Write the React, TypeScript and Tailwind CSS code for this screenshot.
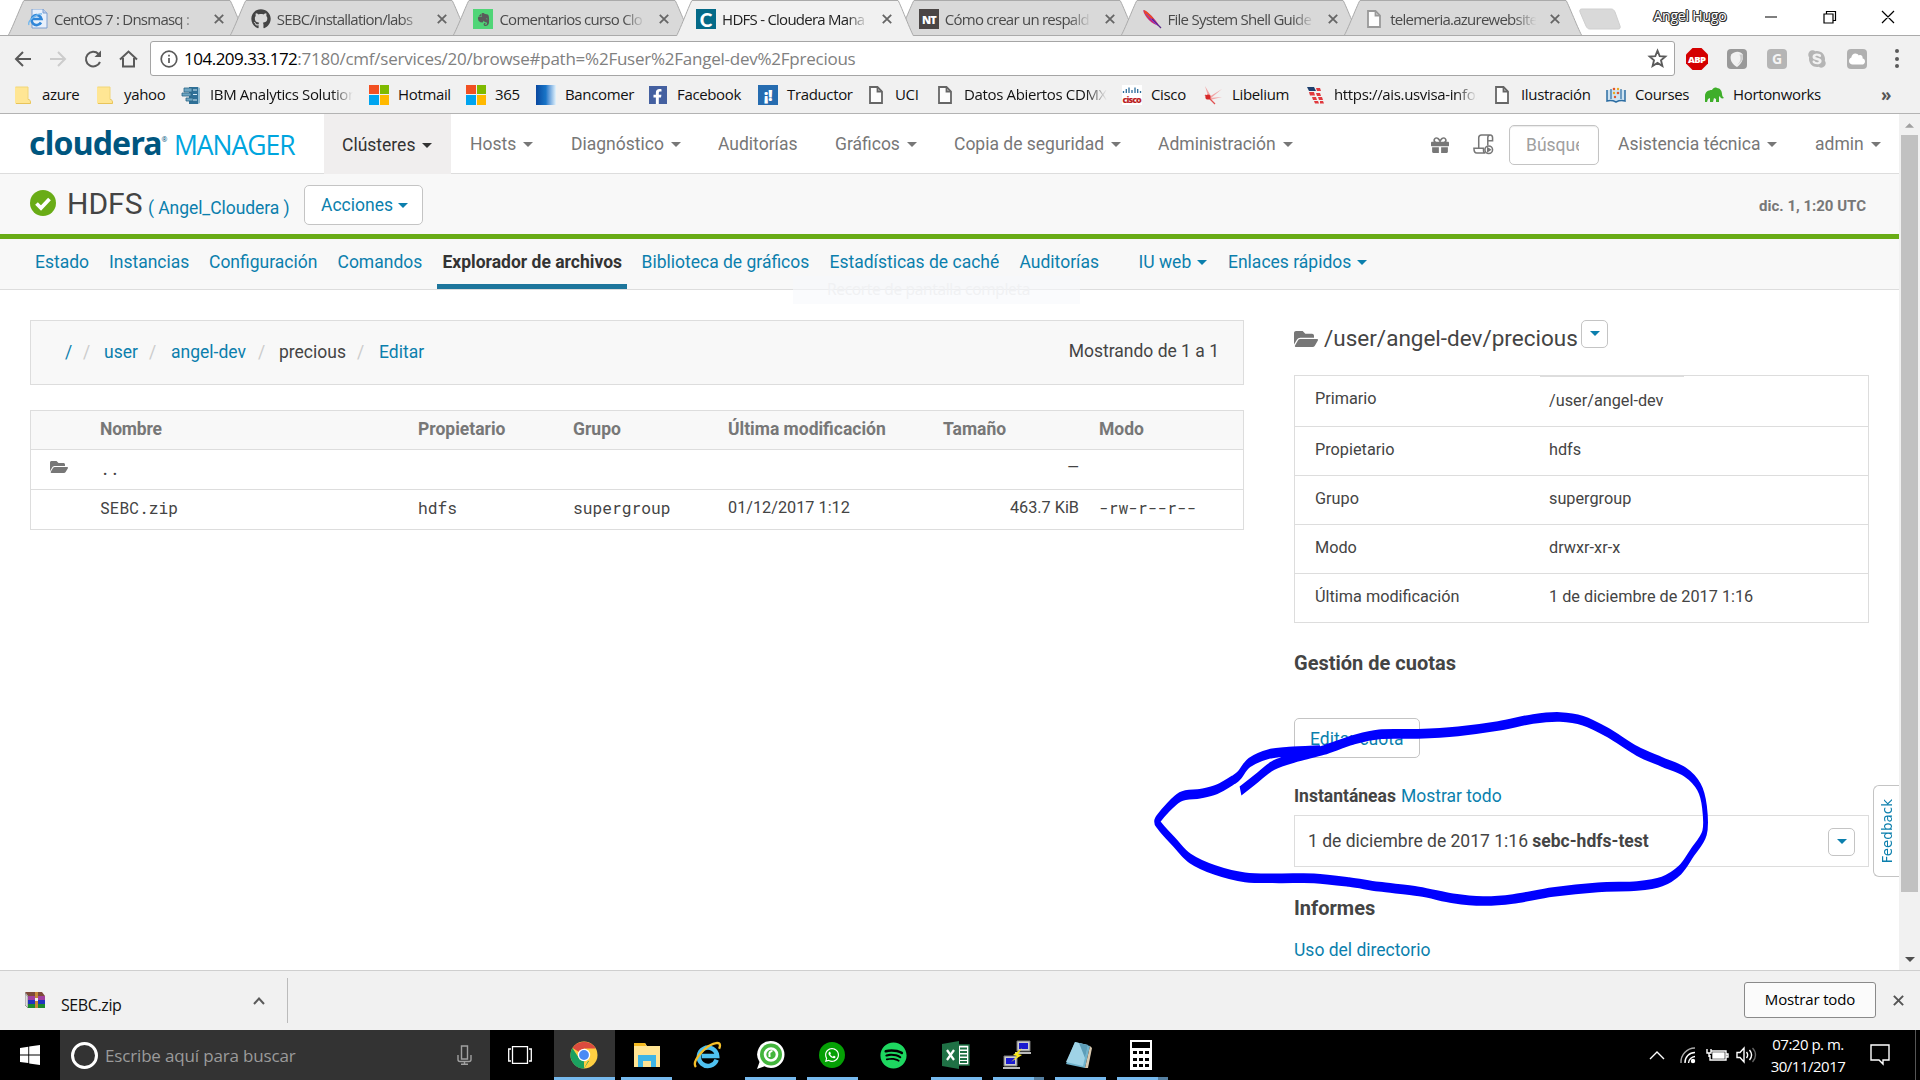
import React from "react";
import { FaGithub, FaEvernote, FaFolderOpen, FaWhatsapp, FaSpotify, FaFacebookF, FaGift, FaSkype, FaCloud } from "react-icons/fa";

const UI = "font-['Open_Sans','Noto_Sans',sans-serif]";

function Caret({ className = "" }: { className?: string }) {
  return (
    <svg viewBox="0 0 10 5" className={`h-[5px] w-[10px] shrink-0 ${className}`} fill="currentColor">
      <path d="M0 0h10L5 5z" />
    </svg>
  );
}

function PageIcon({ className = "text-[#666]" }: { className?: string }) {
  return (
    <svg viewBox="0 0 14 18" className={`h-[18px] w-[14px] ${className}`} fill="#fdfdfd" stroke="currentColor" strokeWidth="1.8">
      <path d="M1 1h7.5L13 5.500V17H1z" />
      <path d="M8.500 1v4.500H13" fill="none" />
    </svg>
  );
}

function IEPage() {
  return (
    <svg viewBox="0 0 20 20" className="size-5">
      <path d="M4 0h11l4 4v15H4z" fill="#e8f0fb" stroke="#7d9fd0" />
      <path d="M15 0v4h4" fill="#b9cdec" stroke="#7d9fd0" />
      <path d="M13 13.500A5 5 0 1 1 13.500 10H5" fill="none" stroke="#2f86d8" strokeWidth="2.600" />
      <path d="M1 16C-1 12 9 4 14 5" fill="none" stroke="#6fb6ee" strokeWidth="1.300" />
    </svg>
  );
}

function Feather() {
  return (
    <svg viewBox="0 0 20 20" className="size-5">
      <path d="M1 1c4 1 13 9 16 16C10 15 3 9 1 1z" fill="#c2267e" />
      <path d="M2 1c3 1 7 5 10 9L6 9C4 7 2 4 2 1z" fill="#e8462c" />
      <path d="M10 10l9 9" stroke="#5b2a86" strokeWidth="1.300" />
      <path d="M4 5l11 11" stroke="#7f3ad0" strokeWidth="1" />
    </svg>
  );
}

const tabs = [
  { title: "CentOS 7 : Dnsmasq :", icon: <IEPage /> },
  { title: "SEBC/installation/labs", icon: <FaGithub className="size-5 text-[#444]" /> },
  {
    title: "Comentarios curso Clo",
    icon: (
      <span className="flex size-5 items-center justify-center bg-[#50d577]">
        <FaEvernote className="size-[15px] text-[#5a5a5a]" />
      </span>
    ),
  },
  {
    title: "HDFS - Cloudera Mana",
    active: true,
    icon: <span className="flex size-5 items-center justify-center bg-[#046a88] font-['Lato'] text-[19px] leading-none font-black text-white">C</span>,
  },
  {
    title: "Cómo crear un respald",
    icon: <span className="flex size-5 items-center justify-center bg-[#4b4645] font-['Open_Sans'] text-[11px] leading-none font-extrabold tracking-[-1px] text-white">NT</span>,
  },
  { title: "File System Shell Guide", icon: <Feather /> },
  { title: "telemeria.azurewebsite", icon: <PageIcon className="ml-[3px] text-[#999]" /> },
];

function CloseX({ className = "" }: { className?: string }) {
  return (
    <svg viewBox="0 0 10 10" className={`size-[10px] ${className}`} stroke="currentColor" strokeWidth="1.8">
      <path d="M.8.8l8.400 8.400M9.200.8L.8 9.200" />
    </svg>
  );
}

function TabStrip() {
  return (
    <div className={`flex h-9 bg-[linear-gradient(#aaa,#aaa)] bg-[length:100%_1px] bg-bottom bg-no-repeat pl-[7.5px] ${UI}`}>
      {tabs.map((t) => (
        <div key={t.title} className={`relative mr-[-15.3px] h-9 w-[238px] shrink-0 ${t.active ? "z-10" : ""}`}>
          <svg viewBox="0 0 238 36" className="absolute inset-0 h-9 w-[238px]">
            <path
              d={t.active ? "M0 36.500C2 35 15 .5 16 .5H222C223 .5 236 35 238 36.500" : "M0 35.500C2 34 15 .5 16 .5H222C223 .5 236 34 238 35.500"}
              fill={t.active ? "#f1f1f1" : "#d9d9d9"}
              stroke="#aaa"
            />
            {!t.active && <path d="M0 35.500H238" stroke="#aaa" />}
          </svg>
          <div className="relative flex h-full items-center pt-0.5 pl-[20.500px]">
            <span className="flex w-5">{t.icon}</span>
            <span
              className={`ml-[6px] w-[148px] text-[15px] leading-5 tracking-[-0.75px] whitespace-nowrap [mask-image:linear-gradient(to_right,black_84%,transparent_99%)] ${t.active ? "text-[#222]" : "text-[#4a4a4a]"}`}
            >
              {t.title}
            </span>
            <CloseX className="ml-[12px] text-[#666]" />
          </div>
        </div>
      ))}
      <svg viewBox="0 0 44 22" className="mt-2 ml-[12px] h-[22px] w-[44px]">
        <path d="M4 1h29c2 0 3 1 4 3l5 14c.6 2 0 3-2 3H12c-2 0-3-1-4-3L2 4c-.6-2 0-3 2-3z" fill="#d9d9d9" stroke="#cfcfcf" />
      </svg>
      <span className="mt-[6px] ml-[31px] w-[75px] text-[14px] leading-5 tracking-[-0.2px] whitespace-nowrap text-white [text-shadow:1px_0_#333,-1px_0_#333,0_1px_#333,0_-1px_#333,1px_1px_#333,-1px_-1px_#333]">
        Angel Hugo
      </span>
      <svg viewBox="0 0 132 14" className="mt-[10px] ml-[36px] h-[14px] w-[132px]" fill="none" stroke="#000" strokeWidth="1.200">
        <path d="M1 7h12M60 4h9v9h-9zM62.500 4V1.500h9v9H69M118 1l12 12M130 1l-12 12" />
      </svg>
    </div>
  );
}

function Toolbar() {
  return (
    <div className={`flex h-[45px] items-center bg-[#f1f1f1] pl-[14px] ${UI}`}>
      <svg viewBox="0 0 124 20" className="h-5 w-[124px]" fill="none" stroke="#5a5a5a" strokeWidth="2">
        <path d="M17 10H2M9 3l-7 7 7 7" />
        <path d="M36 10h15M44 3l7 7-7 7" stroke="#ccc" />
        <path d="M86 13a7.300 7.300 0 1 1-1.500-8" />
        <path d="M87 1.500V8h-6.500z" fill="#5a5a5a" stroke="none" />
        <path d="M106 10.500l8.500-8 8.500 8M109 9v8.500h11V9" />
      </svg>
      <div className="ml-3 flex h-[35px] w-[1525px] items-center rounded-[3px] border border-[#a5a5a5] bg-white pl-[9px]">
        <svg viewBox="0 0 18 18" className="size-[18px]" fill="none" stroke="#5a5a5a" strokeWidth="1.700">
          <circle cx="9" cy="9" r="7.800" />
          <path d="M9 8v5M9 4.700v1.900" />
        </svg>
        <span className="ml-[6px] text-[17px] leading-6 tracking-[-0.24px] whitespace-nowrap text-[#808080]">
          <span className="tracking-[-0.5px] text-black">104.209.33.172</span>:7180/cmf/services/20/browse#path=%2Fuser%2Fangel-dev%2Fprecious
        </span>
        <svg viewBox="0 0 24 24" className="mr-[6px] ml-auto size-[21px]" fill="none" stroke="#5a5a5a" strokeWidth="2.100">
          <path d="M12 3l2.500 6.200 6.500.5-5 4.300 1.600 6.500L12 17l-5.600 3.500L8 14 3 9.700l6.500-.5z" />
        </svg>
      </div>
      <svg viewBox="0 0 22 22" className="ml-[11px] size-[22px]">
        <path d="M6.500 0h9L22 6.500v9L15.500 22h-9L0 15.500v-9z" fill="#d40000" />
        <text x="11" y="14.500" textAnchor="middle" fontFamily="Open Sans" fontWeight="800" fontSize="9.500" textLength="18" fill="#fff">ABP</text>
      </svg>
      <span className="ml-[19px] flex size-5 items-center justify-center rounded bg-[#999]">
        <svg viewBox="0 0 14 14" className="size-4">
          <path d="M2 3c3-3 8-3 10 0 1 4-1 8-5 11C3 12 0 7 2 3z" fill="#f1f1f1" />
          <path d="M9 3c2 3 1 7-2 9 3-1 6-5 5-9z" fill="#ccc" />
        </svg>
      </span>
      <span className="ml-5 flex size-5 items-center justify-center rounded-sm bg-[#b5b5b5] text-[14px] leading-none font-bold text-[#f4f4f4]">G</span>
      <FaSkype className="ml-5 size-5 text-[#b5b5b5]" />
      <span className="ml-5 flex size-5 items-center justify-center rounded bg-[#b0b0b0]">
        <FaCloud className="size-4 text-white" />
      </span>
      <span className="ml-[28px] flex flex-col gap-[3.500px]">
        <i className="size-1 rounded-full bg-[#5a5a5a]" />
        <i className="size-1 rounded-full bg-[#5a5a5a]" />
        <i className="size-1 rounded-full bg-[#5a5a5a]" />
      </span>
    </div>
  );
}

function Folder() {
  return (
    <svg viewBox="0 0 16 18" className="h-[18px] w-4">
      <path d="M0 1h13v13l3 1v2.500H0z" fill="#ffe694" />
      <path d="M13 13.500c2 0 2.500 1 2.500 4H1" fill="none" stroke="#e8c45a" />
      <path d="M.5 1h12.500v12.500" fill="none" stroke="#f1d679" />
    </svg>
  );
}

function MsLogo() {
  return (
    <span className="grid size-5 grid-cols-2 gap-px">
      <i className="bg-[#f25022]" />
      <i className="bg-[#7fba00]" />
      <i className="bg-[#00a4ef]" />
      <i className="bg-[#ffb900]" />
    </span>
  );
}

const bookmarks: { label: string; w: string; icon: React.ReactNode; fade?: boolean }[] = [
  { label: "azure", w: "w-[82px]", icon: <Folder /> },
  { label: "yahoo", w: "w-[86px]", icon: <Folder /> },
  {
    label: "IBM Analytics Solutions",
    w: "w-[188px]",
    fade: true,
    icon: (
      <svg viewBox="0 0 20 20" className="size-5">
        <path d="M8 2h9v17H8z" fill="#2f7097" />
        <path d="M17 2l2 1v15l-2 1z" fill="#8fb9cf" />
        <path d="M3 3h8v4H3zM1 8h9v3H1zM5 13h7v3H5z" fill="#6ea7c4" stroke="#2b6486" strokeWidth=".8" />
        <path d="M12 5h4M12 9.500h4M12 15h4" stroke="#d7eaf4" />
      </svg>
    ),
  },
  { label: "Hotmail", w: "w-[97px]", icon: <MsLogo /> },
  { label: "365", w: "w-[70px]", icon: <MsLogo /> },
  { label: "Bancomer", w: "w-[112px]", icon: <span className="size-5 bg-linear-to-r from-[#0a48a0] via-[#1976c8] via-50% to-[#e4f3fb]" /> },
  {
    label: "Facebook",
    w: "w-[110px]",
    icon: (
      <span className="flex size-[18px] items-end justify-end bg-[#4460a0]">
        <FaFacebookF className="mr-[2px] size-[15px] text-white" />
      </span>
    ),
  },
  { label: "Traductor", w: "w-[108px]", icon: <span className="flex size-5 items-center justify-center bg-[#266cb0] text-[16px] leading-none font-extrabold text-white">¡!</span> },
  { label: "UCI", w: "w-[69px]", icon: <PageIcon /> },
  { label: "Datos Abiertos CDMX", w: "w-[187px]", fade: true, icon: <PageIcon /> },
  {
    label: "Cisco",
    w: "w-[81px]",
    icon: (
      <svg viewBox="0 0 20 20" className="size-5 bg-white">
        <path d="M1.500 6v2M4.300 4v4M7 2.500V8M10 5v3M13 2.500V8M15.700 4v4M18.500 6v2" stroke="#2b6c9a" strokeWidth="1.300" />
        <text x="10" y="17.500" textAnchor="middle" fontFamily="Open Sans" fontWeight="800" fontSize="9" textLength="19" fill="#b22">cisco</text>
      </svg>
    ),
  },
  {
    label: "Libelium",
    w: "w-[102px]",
    icon: (
      <svg viewBox="0 0 20 20" className="size-5">
        <path d="M5 11L2 1l6 10zM6 12L19 4 8 13zM6 13l13-1-12 3z" fill="#f2a6a6" />
        <path d="M2 10l5 4M5 12l7 7" stroke="#e05050" strokeWidth="1.300" />
        <circle cx="5" cy="12" r="2.600" fill="#d62828" />
      </svg>
    ),
  },
  {
    label: "https://ais.usvisa-info.com",
    w: "w-[187px]",
    fade: true,
    icon: (
      <svg viewBox="0 0 18 18" className="size-[18px]">
        <path d="M1 1h7l2 4H3z" fill="#1c3f6e" />
        <path d="M10 2h4l1 3h-4zM3 6h5l1 3.500H4zM10 7h4l1 3h-4zM6 11h4l1 3H7zM12 11h4l1 3h-4zM8 15h4l1 2.500H9zM14 15h3l1 2.500h-4z" fill="#e0393e" />
      </svg>
    ),
  },
  { label: "Ilustración", w: "w-[114px]", icon: <PageIcon /> },
  {
    label: "Courses",
    w: "w-[98px]",
    icon: (
      <svg viewBox="0 0 20 20" className="size-5">
        <path d="M1 5v11c4-1 7 0 9 1 2-1 5-2 9-1V5" fill="#cfe3f1" stroke="#2c6da3" strokeWidth="1.500" />
        <path d="M5 4v10M15 4v10" stroke="#2c6da3" strokeWidth="1.200" />
        <g fill="#e2572b"><circle cx="8" cy="4" r="1.300" /><circle cx="12" cy="8" r="1.300" /><circle cx="9" cy="12" r="1.200" /></g>
        <g fill="#e9a820"><circle cx="12" cy="4" r="1.200" /><circle cx="8" cy="8" r="1.200" /></g>
      </svg>
    ),
  },
  {
    label: "Hortonworks",
    w: "w-[177px]",
    icon: (
      <svg viewBox="0 0 20 20" className="size-5" fill="#3fae2a">
        <path d="M1 17V11c0-4 3-6 7-6 1-2 3-3 5-2 3 0 5 3 5 6 0 2 1 3 2 4-2 1-4 0-4-2l-1 1v5h-3v-3l-2-1-1 4H6v-4l-2 1-1 3z" />
      </svg>
    ),
  },
];

function Bookmarks() {
  return (
    <div className={`flex h-[33px] items-center border-b border-[#b3b3b3] bg-[#f1f1f1] pb-[5px] pl-[13px] text-[15px] tracking-[-0.35px] text-[#111] ${UI}`}>
      {bookmarks.map((b) => (
        <div key={b.label} className={`flex shrink-0 items-center whitespace-nowrap ${b.w}`}>
          <span className="flex w-5 justify-center">{b.icon}</span>
          <span className={b.fade ? "ml-[9px] w-[143px] overflow-hidden [mask-image:linear-gradient(to_right,black_85%,transparent_100%)]" : "ml-[9px]"}>{b.label}</span>
        </div>
      ))}
      <span className="text-[17px] font-bold text-[#555]">»</span>
    </div>
  );
}

const nav = [
  { label: "Hosts", w: "w-[101px]", caret: true },
  { label: "Diagnóstico", w: "w-[147px]", caret: true },
  { label: "Auditorías", w: "w-[117px]" },
  { label: "Gráficos", w: "w-[119px]", caret: true },
  { label: "Copia de seguridad", w: "w-[204px]", caret: true },
  { label: "Administración", w: "w-[273px]", caret: true },
];

function Navbar() {
  return (
    <div className="flex h-[60px] shrink-0 items-center border-b border-[#ddd] bg-white text-[17.500px] text-[#777]">
      <div className="flex w-[324px] items-baseline pb-[2px] pl-[29px] leading-none whitespace-nowrap">
        <span className="w-[145px] font-['Noto_Sans'] text-[32px] font-bold tracking-[-0.8px] text-[#00567f]">
          cloudera<sup className="top-[-1.800em] text-[7px] font-normal">®</sup>
        </span>
        <span className="font-['Open_Sans'] text-[26.500px] font-medium tracking-[-1px] text-[#00a5de]">MANAGER</span>
      </div>
      <div className="-mb-px flex h-[60px] w-[127px] items-center gap-[7px] bg-[#f0eeee] pt-[2px] pl-[18px] text-[#333]">
        Clústeres
        <Caret />
      </div>
      <div className="ml-[19px] flex pt-[2px]">
        {nav.map((n) => (
          <div key={n.label} className={`flex items-center gap-[7px] whitespace-nowrap ${n.w}`}>
            {n.label}
            {n.caret && <Caret />}
          </div>
        ))}
      </div>
      <FaGift className="mt-[2px] size-[18px]" />
      <svg viewBox="0 0 22 22" className="mt-[2px] ml-6 size-[21px]" fill="none" stroke="currentColor" strokeWidth="1.600">
        <path d="M6 15V4c0-2 1-3 3-3h9c2 0 2.500 1 2.500 3v3h-5V4c0-2 1-3 2.500-3M15.500 7v5M2 15h9v2c0 2 1 3 2 3H4c-2 0-3-2-3-5z" />
        <circle cx="16.500" cy="16.500" r="4" />
        <path d="M15.500 14.800l2.500 1.700-2.500 1.700z" fill="currentColor" />
      </svg>
      <div className="mt-[2px] ml-[15px] flex h-10 w-[90px] items-center rounded-[5px] border border-[#c4c4c4] px-4 shadow-[inset_0_1px_1px_rgba(0,0,0,0.08)]">
        <span className="w-[53px] overflow-hidden pt-0.5 whitespace-nowrap text-[#a0a0a0]">Búsqueda</span>
      </div>
      <div className="ml-[19px] flex w-[197px] items-center gap-[7px] pt-[2px]">
        Asistencia técnica
        <Caret />
      </div>
      <div className="flex items-center gap-[7px] pt-[2px]">
        admin
        <Caret />
      </div>
    </div>
  );
}

function CaretButton({ className = "" }: { className?: string }) {
  return (
    <span className={`flex h-7 w-[27px] shrink-0 items-center justify-center rounded-[5px] border border-[#c4c4c4] bg-white text-[#0b7fad] ${className}`}>
      <Caret />
    </span>
  );
}

function ServiceHeader() {
  return (
    <div className="flex h-[65px] shrink-0 items-center border-b-[5px] border-[#69ac16] bg-[#f8f8f8] pr-[33px] pl-[30px] whitespace-nowrap text-[#0b7fad]">
      <svg viewBox="0 0 26 26" className="mb-[2px] size-[26px]">
        <circle cx="13" cy="13" r="13" fill="#69ac16" />
        <path d="M6.500 13.500l4.500 4.500 8.500-9" fill="none" stroke="#fff" strokeWidth="3.800" />
      </svg>
      <div className="ml-[11px] flex w-[237px] items-baseline">
        <span className="w-[81px] text-[30px] leading-[40px] text-[#444]">HDFS</span>
        <span className="text-[17.500px] tracking-[-0.060px]">( Angel_Cloudera )</span>
      </div>
      <div className="mt-[1px] flex h-10 w-[119px] items-center gap-[5px] rounded-[5px] border border-[#c4c4c4] bg-white pt-px pl-4 text-[17.500px]">
        Acciones
        <Caret />
      </div>
      <span className="ml-auto pt-[5px] text-[15px] font-bold text-[#777]">dic. 1, 1:20 UTC</span>
    </div>
  );
}

const subnav = [
  { label: "Estado", w: "w-[74px]" },
  { label: "Instancias", w: "w-[100px]" },
  { label: "Configuración", w: "w-[128.500px]" },
  { label: "Comandos", w: "w-[99px]" },
  { label: "Explorador de archivos", w: "w-[190px]", active: true },
  { label: "Biblioteca de gráficos", w: "w-[188px] ml-[15px]" },
  { label: "Estadísticas de caché", w: "w-[190px]" },
  { label: "Auditorías", w: "w-[119px]" },
  { label: "IU web", w: "w-[89.500px]", caret: true },
  { label: "Enlaces rápidos", w: "w-[150px]", caret: true },
];

function SubNav() {
  return (
    <div className="relative flex h-[51px] shrink-0 border-b border-[#ddd] bg-[#f8f8f8] pl-[35px] text-[17.500px] whitespace-nowrap text-[#0b7fad]">
      {subnav.map((s) => (
        <div
          key={s.label}
          className={
            s.active
              ? `flex h-[50px] items-center border-b-[5px] border-[#1d769c] pt-[2px] pl-[6px] font-bold text-[#333] ${s.w}`
              : `flex h-[45px] items-center gap-[6px] pt-[2px] ${s.w}`
          }
        >
          {s.label}
          {s.caret && <Caret />}
        </div>
      ))}
      <div className={`absolute top-[37px] left-[793px] flex h-7 w-[287px] items-center bg-[#f7f9fc]/60 pl-[34px] text-[15.500px] tracking-[-0.300px] text-[#f0f1f3] ${UI}`}>
        Recorte de pantalla completa
      </div>
    </div>
  );
}

function Browser() {
  const cols = "grid grid-cols-[69px_318px_155px_155px_215px_156px_144px]";
  const mono = "font-['Roboto_Mono','Liberation_Mono',monospace]";
  return (
    <div className="w-[1214px]">
      <div className="flex h-[65px] items-center border border-[#ddd] bg-[#f8f8f8] pr-[24px] pl-[34px] text-[17.500px] text-[#0b7fad]">
        <span className="w-[18px]">/</span>
        <span className="w-[21px] text-[#ccc]">/</span>
        <span className="w-[45px]">user</span>
        <span className="w-[22px] text-[#ccc]">/</span>
        <span className="w-[87px]">angel-dev</span>
        <span className="w-[21px] text-[#ccc]">/</span>
        <span className="w-[78px] text-[#444]">precious</span>
        <span className="w-[22px] text-[#ccc]">/</span>
        <span>Editar</span>
        <span className="ml-auto pb-[3px] text-[#444]">Mostrando de 1 a 1</span>
      </div>
      <div className="mt-[25px] border border-[#ddd] text-[16.250px] text-[#444]">
        <div className={`${cols} h-[38px] items-center bg-[#f8f8f8] pb-px text-[17.500px] font-bold text-[#777]`}>
          <span />
          <span className="tracking-[-0.200px]">Nombre</span>
          <span>Propietario</span>
          <span>Grupo</span>
          <span>Última modificación</span>
          <span>Tamaño</span>
          <span>Modo</span>
        </div>
        <div className={`${cols} h-[40px] items-center border-t border-[#ddd]`}>
          <FaFolderOpen className="mb-[5px] ml-[19px] size-[18px] text-[#777]" />
          <span className={mono}>..</span>
          <span />
          <span />
          <span />
          <span className="pr-5 pb-1 text-right text-[15px]">—</span>
        </div>
        <div className={`${cols} h-[40px] items-center border-t border-[#ddd] pb-[3px]`}>
          <span />
          <span className={mono}>SEBC.zip</span>
          <span className={mono}>hdfs</span>
          <span className={mono}>supergroup</span>
          <span>01/12/2017 1:12</span>
          <span className="pr-5 text-right">463.7 KiB</span>
          <span className={mono}>-rw-r--r--</span>
        </div>
      </div>
    </div>
  );
}

const details = [
  ["Primario", "/user/angel-dev"],
  ["Propietario", "hdfs"],
  ["Grupo", "supergroup"],
  ["Modo", "drwxr-xr-x"],
  ["Última modificación", "1 de diciembre de 2017 1:16"],
];

function Details() {
  return (
    <div className="ml-[50px] w-[575px] whitespace-nowrap text-[#444]">
      <div className="flex h-[38px] items-center">
        <FaFolderOpen className="size-6 text-[#777]" />
        <span className="ml-[6px] w-[258px] text-[22.500px]">/user/angel-dev/precious</span>
        <CaretButton className="-mt-[11px] -ml-px" />
      </div>
      <div className="relative mt-[17px] border border-[#ddd] text-[16.250px]">
        <i className="absolute top-0 left-[245px] h-px w-[144px] bg-[#ddd]" />
        {details.map(([k, v], i) => (
          <div key={k} className={i ? "flex h-[49px] items-center border-t border-[#ddd] pb-[2px]" : "flex h-[50px] items-center"}>
            <span className={i ? "w-[234px] pl-5" : "w-[234px] pb-[3px] pl-5"}>{k}</span>
            <span className="pl-5">{v}</span>
          </div>
        ))}
      </div>
      <h3 className="mt-[28px] text-[20px] leading-6 font-bold">Gestión de cuotas</h3>
      <div className="mt-[43px] flex h-10 w-[126px] items-center rounded-[5px] border border-[#c4c4c4] pt-[2px] pl-[15px] text-[17.500px] text-[#0b7fad]">Editar cuota</div>
      <div className="mt-[26px] flex gap-[5px] text-[17.500px] leading-6">
        <b>Instantáneas</b>
        <span className="text-[#0b7fad]">Mostrar todo</span>
      </div>
      <div className="mt-[7px] flex h-[52px] items-center border border-[#ddd] pr-[13px] pl-[13px] text-[17.500px]">
        1 de diciembre de 2017 1:16&nbsp;<b>sebc-hdfs-test</b>
        <CaretButton className="mt-px ml-auto" />
      </div>
      <h3 className="mt-[29px] text-[20px] leading-6 font-bold">Informes</h3>
      <div className="mt-[18px] text-[17.500px] leading-6 text-[#0b7fad]">Uso del directorio</div>
    </div>
  );
}

// Centre line of the freehand loop, in page pixels.
const loop: [number, number][] = [
  [1240.5, 791], [1257, 778], [1274, 765], [1299, 756.5], [1324, 750], [1353, 740], [1379, 734.3], [1418, 733.8], [1458, 731.3], [1498, 726],
  [1533, 719], [1560, 717], [1583, 720.7], [1608, 732.7], [1637, 751], [1662, 762], [1685, 772], [1699, 787], [1704.5, 807], [1704.5, 833],
  [1692, 853], [1680, 870], [1662, 881.5], [1637, 886], [1598, 887.3], [1553, 892], [1513, 899], [1483, 901], [1453, 898.3], [1419, 891.5],
  [1379, 886.7], [1349, 882], [1314, 878.3], [1279, 878.3], [1245, 877.3], [1215, 870], [1190, 858.3], [1175, 843], [1159, 825], [1159, 818],
  [1180, 797], [1200, 793.8], [1217, 789.3], [1234, 779.5], [1239.5, 775], [1249.5, 762.5], [1269, 754], [1289, 751.7], [1320, 750],
];

const NIB = 0.5;

function loopPath(pts: [number, number][]) {
  const p = pts.map(([x, y]) => [x / NIB, y]);
  let d = `M${p[0][0]} ${p[0][1]}`;
  for (let i = 0; i < p.length - 1; i++) {
    const a = p[Math.max(0, i - 1)];
    const b = p[i];
    const c = p[i + 1];
    const e = p[Math.min(p.length - 1, i + 2)];
    d += `C${b[0] + (c[0] - a[0]) / 6} ${b[1] + (c[1] - a[1]) / 6} ${c[0] - (e[0] - b[0]) / 6} ${c[1] - (e[1] - b[1]) / 6} ${c[0]} ${c[1]}`;
  }
  return d;
}

function Annotation() {
  return (
    <svg viewBox="0 0 1920 1080" className="pointer-events-none absolute inset-0 z-20 h-[1080px] w-[1920px]">
      <g transform={`scale(${NIB} 1)`}>
        <path d={loopPath(loop)} fill="none" stroke="#0000fe" strokeWidth="9.700" strokeLinejoin="round" />
      </g>
    </svg>
  );
}

function Scrollbar() {
  return (
    <div className="flex w-[21px] flex-col items-center bg-[#f1f1f1]">
      <svg viewBox="0 0 10 5" className="mt-[9px] h-[5px] w-[9px]" fill="#a0a0a0"><path d="M0 5h10L5 0z" /></svg>
      <i className="mt-[7px] h-[757px] w-[17px] bg-[#c1c1c1]" />
      <Caret className="mt-auto mb-[8px] text-[#505050]" />
    </div>
  );
}

function Shelf() {
  return (
    <div className={`flex h-[60px] items-center border-t border-[#cfcfcf] bg-[#f1f1f1] pl-[25px] ${UI}`}>
      <svg viewBox="0 0 20 16" className="mb-[1px] h-4 w-5">
        <path d="M0 1l3 4v11l-3-3z" fill="#ddd" stroke="#666" strokeWidth=".6" />
        <path d="M0 0h17l3 4H3z" fill="#7d4a3a" />
        <path d="M3 4h17v4H3z" fill="#a03fa0" />
        <path d="M3 8h17v4H3z" fill="#2233c0" />
        <path d="M3 12h17v4H3z" fill="#1c8a2e" />
        <path d="M10 0h3v16h-3z" fill="#c78a3a" />
        <path d="M10 6h3v3h-3z" fill="#eee" />
      </svg>
      <span className="mt-[8px] ml-4 w-[192px] text-[16px] tracking-[-0.400px] text-[#111]">SEBC.zip</span>
      <svg viewBox="0 0 12 8" className="h-2 w-3" fill="none" stroke="#5a5a5a" strokeWidth="2"><path d="M1 7l5-5.500L11 7" /></svg>
      <i className="ml-[22px] h-[45px] w-px bg-[#bbb]" />
      <span className="mb-px ml-auto flex h-9 w-[132px] items-center justify-center rounded-[3px] border border-[#8a8a8a] bg-[#fbfbfb] pb-px text-[15px] tracking-[-0.150px] whitespace-nowrap text-black">Mostrar todo</span>
      <CloseX className="mr-4 ml-[17px] !size-[11px] text-[#555]" />
    </div>
  );
}

function WhatsOutline() {
  return (
    <svg viewBox="0 0 28 28" className="size-7">
      <path d="M14 0a13.500 13.500 0 0 1 0 27c-2.500 0-4.500-.6-6.500-1.700L0 28l2.500-7A13.500 13.500 0 0 1 14 0z" fill="#fff" />
      <circle cx="14" cy="13.500" r="11" fill="#43b53c" />
      <circle cx="14" cy="13.500" r="6" fill="none" stroke="#fff" strokeWidth="2.600" />
      <path d="M15.500 10a3 3 0 0 0-3 4v2" fill="none" stroke="#fff" strokeWidth="2" />
    </svg>
  );
}

const apps: { name: string; icon: React.ReactNode; line: string }[] = [
  {
    name: "explorer",
    line: "bg-[#76b9ed]",
    icon: (
      <svg viewBox="0 0 28 24" className="h-6 w-7">
        <path d="M1 0h11l2 3h13v21H1z" fill="#ffe493" />
        <path d="M1 0h11l1 3H1z" fill="#f3b920" />
        <path d="M5 12h18v12h-5v-6h-8v6H5z" fill="#3db5e6" />
      </svg>
    ),
  },
  {
    name: "ie",
    line: "",
    icon: (
      <svg viewBox="0 0 30 30" className="mr-[2px] size-[29px]">
        <path d="M24.500 19.500A9.500 9.500 0 1 1 25 15.500H9" fill="none" stroke="#4fc1f0" strokeWidth="4.600" />
        <path d="M3 27C-2 21 14 3 25 2c4 0 3 4 2 6" fill="none" stroke="#f5c02a" strokeWidth="2.400" />
      </svg>
    ),
  },
  { name: "whatsapp", line: "bg-[#76b9ed]", icon: <WhatsOutline /> },
  {
    name: "whatsapp-web",
    line: "bg-[#76b9ed]",
    icon: (
      <span className="mr-[2px] flex size-[26px] items-center justify-center rounded-full bg-[#05a005]">
        <FaWhatsapp className="size-4 text-white" />
      </span>
    ),
  },
  { name: "spotify", line: "", icon: <FaSpotify className="mr-[2px] size-[27px] text-[#1ed760]" /> },
  {
    name: "excel",
    line: "bg-[#76b9ed]",
    icon: (
      <svg viewBox="0 0 28 28" className="mr-[2px] size-7">
        <path d="M15 4h12v20H15z" fill="#fff" stroke="#1f7145" strokeWidth="1.400" />
        <path d="M18 7.500h7M18 11h7M18 14.500h7M18 18h7M18 21h7" stroke="#1f7145" strokeWidth="2" />
        <path d="M0 3l17-3v28L0 25z" fill="#1f7145" />
        <path d="M5 9l7 10M12 9L5 19" stroke="#fff" strokeWidth="2.200" />
      </svg>
    ),
  },
  {
    name: "putty",
    line: "bg-[linear-gradient(to_right,#76b9ed_80%,#557fa0_80%)]",
    icon: (
      <svg viewBox="0 0 30 30" className="mr-[3px] size-[30px]">
        <path d="M15 1h13v10H15zM2 16h13v10H2z" fill="#ccc" stroke="#777" />
        <path d="M17 3h9v6h-9zM4 18h9v6H4z" fill="#1a1ad0" />
        <path d="M13 12h16v2H13zM1 27h17v2H1z" fill="#bbb" />
        <path d="M20 8l-9 7 4 1-6 6 11-7-4-1z" fill="#f8e71c" />
      </svg>
    ),
  },
  {
    name: "notepad",
    line: "bg-[#76b9ed]",
    icon: (
      <svg viewBox="0 0 28 28" className="mr-[4px] size-7">
        <path d="M10 1l15 4-5 22L1 23z" fill="#6fb3cd" />
        <path d="M10 1l13 3-5 21L1 21z" fill="#9fd3e6" />
        <path d="M14 2l9 2-3 13z" fill="#5c9db8" />
        <path d="M25 5l2 2-4 20-3 0z" fill="#d8c9b0" />
      </svg>
    ),
  },
  {
    name: "calculator",
    line: "bg-[linear-gradient(to_right,#76b9ed_80%,#557fa0_80%)]",
    icon: (
      <svg viewBox="0 0 22 30" className="mr-[3px] h-[30px] w-[22px]">
        <path d="M0 0h22v30H0z" fill="#fff" />
        <path d="M2 2h18v6H2z" />
        <path d="M3 11h4v3H3zM9 11h4v3H9zM15 11h4v3h-4zM3 18h4v3H3zM9 18h4v3H9zM15 18h4v3h-4zM3 24h4v3H3zM9 24h4v3H9zM15 24h4v3h-4z" />
      </svg>
    ),
  },
];

function Taskbar() {
  return (
    <div className={`flex h-[50px] items-stretch bg-black text-white ${UI}`}>
      <div className="flex w-[60px] items-center justify-center">
        <svg viewBox="0 0 20 20" className="size-5" fill="#fff"><path d="M0 3l8.300-1.200v7.700H0zM9.200 1.600L20 0v9.500H9.200zM0 10.400h8.300v7.700L0 17zM9.200 10.400H20V20L9.200 18.400z" /></svg>
      </div>
      <div className="flex w-[430px] items-center bg-[#333] pl-[11px]">
        <i className="size-[27px] rounded-full border-[3.500px] border-white" />
        <span className="ml-[7px] w-[352px] pt-px text-[17px] tracking-[-0.160px] whitespace-nowrap text-[#9b9b9b]">Escribe aquí para buscar</span>
        <svg viewBox="0 0 15 20" className="h-5 w-[15px]" fill="none" stroke="#a0a0a0" strokeWidth="1.400">
          <path d="M4.500 1h6v13h-6zM1 10v4.500c0 1 1 2 2 2h9c1 0 2-1 2-2V10M7.500 16.500V20M4 19.300h7" />
        </svg>
      </div>
      <div className="flex w-[64px] items-center justify-center pr-[4px]">
        <svg viewBox="0 0 24 18" className="h-[18px] w-6" fill="none" stroke="#fff" strokeWidth="1.300"><path d="M4.500.7h15v16.600h-15zM3 3H.7v12H3M21 3h2.300v12H21" /></svg>
      </div>
      <div className="flex w-[61px] flex-col items-center justify-end border-b-[3px] border-[#76b9ed] bg-[#333] pr-[2px] pb-[8px]">
        <svg viewBox="0 0 28 28" className="size-7">
          <circle cx="14" cy="14" r="13.500" fill="#ffcf42" />
          <path d="M14 14L2.500 7A13.500 13.500 0 0 1 25.700 7.500H14z" fill="#dc4b3e" />
          <path d="M14 27.500A13.500 13.500 0 0 1 2.400 7l6.500 10L14 20l5 0z" fill="#1ba160" />
          <path d="M14 27.500l5.500-10-5.500 3z" fill="#ffcf42" />
          <circle cx="14" cy="14" r="6.200" fill="#fff" />
          <circle cx="14" cy="14" r="4.900" fill="#4a8af4" />
        </svg>
      </div>
      <div className="ml-[6px] flex gap-[11px]">
        {apps.map((a) => (
          <div key={a.name} className="flex w-[51px] flex-col">
            <div className="flex h-[47px] items-center justify-center pt-[3px]">{a.icon}</div>
            <i className={`h-[3px] ${a.line}`} />
          </div>
        ))}
      </div>
      <div className="mr-[4px] ml-auto flex items-center">
        <svg viewBox="0 0 110 20" className="h-5 w-[110px]" fill="none" stroke="#fff" strokeWidth="1.400">
          <path d="M1 14l7-7 7 7" />
          <path d="M32 18A14 14 0 0 1 46 3" stroke="#aaa" />
          <path d="M36 18A10 10 0 0 1 46 7.500M39.500 18a7 7 0 0 1 6.500-6.500" />
          <circle cx="44" cy="16" r="1.500" fill="#fff" />
          <path d="M62 6h15v9H61v-5M77 9h2v3h-2M58 4v4h4V4M60 8v4" />
          <path d="M64 8h11v5H64z" fill="#fff" />
          <path d="M88 7.500h3L95 3v14l-4-4.500h-3zM97.500 7c1.500 2 1.500 4 0 6M100.500 5c2.500 3 2.500 7 0 10" />
          <path d="M103.500 3c4 4 4 10 0 14" stroke="#666" />
        </svg>
        <div className="ml-[10px] w-[78px] text-center text-[15px] leading-[22px] tracking-[-0.500px] whitespace-nowrap">
          <div>07:20 p. m.</div>
          <div>30/11/2017</div>
        </div>
        <svg viewBox="0 0 20 22" className="mr-[25px] ml-[23px] h-[22px] w-5" fill="none" stroke="#fff" strokeWidth="1.400"><path d="M1 1h18v15h-6v4l-4-4H1z" /></svg>
        <i className="h-[50px] w-px bg-[#555]" />
      </div>
    </div>
  );
}

export default function App() {
  return (
    <div className="relative flex h-[1080px] w-[1920px] flex-col overflow-hidden bg-white font-['Roboto',sans-serif]">
      <TabStrip />
      <Toolbar />
      <Bookmarks />
      <div className="flex h-[856px]">
        <div className="relative flex w-[1899px] flex-col overflow-hidden">
          <Navbar />
          <ServiceHeader />
          <SubNav />
          <div className="flex pt-[30px] pl-[30px]">
            <Browser />
            <Details />
          </div>
          <div className="absolute top-[671px] right-0 flex h-[92px] w-[26px] items-center justify-center rounded-l-[6px] border border-r-0 border-[#c4c4c4] bg-white pl-[2px] font-['DejaVu_Sans','Open_Sans'] text-[13.500px] text-[#0b7fad]">
            <span className="rotate-180 [writing-mode:vertical-rl]">Feedback</span>
          </div>
        </div>
        <Scrollbar />
      </div>
      <Shelf />
      <Taskbar />
      <Annotation />
    </div>
  );
}
